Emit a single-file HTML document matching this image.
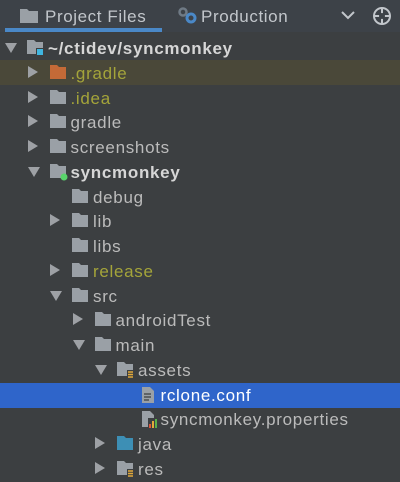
<!DOCTYPE html>
<html><head><meta charset="utf-8"><style>
*{margin:0;padding:0;box-sizing:border-box}
body{width:400px;height:481px;overflow:hidden;background:#3c3f41;font-family:"Liberation Sans",sans-serif;color:#bbbbbb;position:relative}
.hdr{position:absolute;left:0;top:0;width:400px;height:32px;background:#3d4248}
.tab{position:absolute;top:7px;font-size:17px;letter-spacing:0.6px;color:#c2c6cb}
.ul{position:absolute;left:5px;top:28px;width:157px;height:4px;background:#4a88c7}
.row{position:absolute;left:0;width:400px;height:25px;font-size:17px;letter-spacing:0.7px;line-height:25px;white-space:nowrap}
.row span{position:absolute;top:1px}
.arr{position:absolute;top:8px;width:0;height:0}
.ad{border-left:6px solid transparent;border-right:6px solid transparent;border-top:10px solid #9ea1a5;top:8px}
.ar{border-top:6px solid transparent;border-bottom:6px solid transparent;border-left:10px solid #9ea1a5;top:6px}
svg{position:absolute;top:5px}
</style></head><body>
<div class="hdr">
<svg style="left:20px;top:8px" width="18" height="15"><path d="M0 1h7l2 2h9v12H0z" fill="#9aa0a6"/></svg>
<div class="tab" style="left:45px">Project Files</div>
<svg style="left:178px;top:7px" width="20" height="18"><circle cx="5" cy="5" r="3.5" fill="none" stroke="#6f7a85" stroke-width="2.5"/><circle cx="13" cy="11" r="4" fill="none" stroke="#4a88c7" stroke-width="3"/></svg>
<div class="tab" style="left:201px">Production</div>
<svg style="left:341px;top:11px" width="14" height="10"><path d="M1 1l6 6 6-6" fill="none" stroke="#c2c6cb" stroke-width="2"/></svg>
<svg style="left:372px;top:6px" width="20" height="20"><circle cx="10" cy="10" r="8" fill="none" stroke="#c2c6cb" stroke-width="2"/><path d="M10 2v16M2 10h16" stroke="#c2c6cb" stroke-width="2"/><circle cx="10" cy="10" r="3" fill="#3d4248"/></svg>
<div class="ul"></div>
</div>
<div style="position:absolute;left:0;top:60px;width:400px;height:25px;background:#4a4839"></div>
<div style="position:absolute;left:0;top:383px;width:400px;height:25px;background:#2f65ca"></div>
<div id="t"></div>
<script>
function fold(c){return '<path d="M0 0h7l2 2h7v12H0z" fill="'+c+'"/>'}
var rows=[
[0,'d','proj','~/ctidev/syncmonkey','#d6d6d6',1],
[1,'r','#c46a37','.gradle','#a4a43a'],
[1,'r','f','.idea','#a4a43a'],
[1,'r','f','gradle'],
[1,'r','f','screenshots'],
[1,'d','mod','syncmonkey','#d6d6d6',1],
[2,'','f','debug'],
[2,'r','f','lib'],
[2,'','f','libs'],
[2,'r','f','release','#a4a43a'],
[2,'d','f','src'],
[3,'r','f','androidTest'],
[3,'d','f','main'],
[4,'d','res','assets'],
[5,'','doc','rclone.conf','#ffffff'],
[5,'','prop','syncmonkey.properties'],
[4,'r','#3d8fb5','java'],
[4,'r','res','res']];
var h='';
rows.forEach(function(r,i){
var lv=r[0],top=35+i*24.75,x=lv*22.5;
h+='<div class="row" style="top:'+top+'px">';
if(r[1])h+='<div class="arr '+(r[1]=='d'?'ad':'ar')+'" style="left:'+(x+5)+'px"></div>';
var ix=x+27,ic=r[2],s='';
if(ic=='f')s=fold('#9aa0a6');
else if(ic[0]=='#')s=fold(ic);
else if(ic=='proj')s=fold('#9aa0a6')+'<rect x="9" y="8" width="8" height="8" fill="#3c3f41"/><rect x="10" y="9" width="6" height="6" fill="#40b6e0"/>';
else if(ic=='mod')s=fold('#9aa0a6')+'<circle cx="14" cy="13" r="3.5" fill="#59d46b"/>';
else if(ic=='res')s=fold('#9aa0a6')+'<rect x="10" y="8" width="7" height="8" fill="#3c3f41"/><path d="M11 10h5M11 12.5h5M11 15h5" stroke="#e2a93a" stroke-width="1.5"/>';
else if(ic=='doc')s='<path d="M2 0h8l4 4v12H2z" fill="#9aa0a6"/><path d="M4 7h7M4 10h7M4 13h5" stroke="#3c3f41" stroke-width="1.3"/>';
else if(ic=='prop')s='<path d="M2 0h8l4 4v12H2z" fill="#9aa0a6"/><rect x="8" y="7" width="9" height="10" fill="#3c3f41"/><rect x="9" y="13" width="2" height="4" fill="#e0553b"/><rect x="12" y="10" width="2" height="7" fill="#e2a93a"/><rect x="15" y="8" width="2" height="9" fill="#59b04a"/>';
h+='<svg style="left:'+ix+'px" width="18" height="17">'+s+'</svg>';
h+='<span style="left:'+(x+48)+'px;color:'+(r[4]||'#bbbbbb')+(r[5]?';font-weight:bold':'')+'">'+r[3]+'</span></div>';
});
document.getElementById('t').innerHTML=h;
</script>
</body></html>
